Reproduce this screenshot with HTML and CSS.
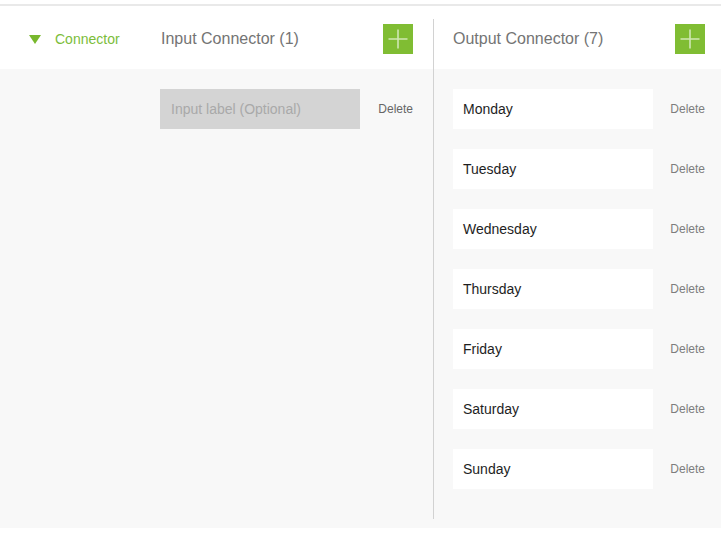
FILE: index.html
```html
<!DOCTYPE html>
<html>
<head>
<meta charset="utf-8">
<link rel="stylesheet" href="styles.css">
</head>
<body>
<div class="panel">
  <div class="side">
    <div class="side-head">
      <span class="tri"></span>
      <span class="side-title">Connector</span>
    </div>
  </div>
  <div class="col col-input">
    <div class="col-head">
      <span class="col-title">Input Connector (1)</span>
      <button class="add" type="button"><svg width="30" height="30" viewBox="0 0 30 30"><path d="M15 5.5V24.5M5.5 15H24.5" stroke="#cfe7b3" stroke-width="1.6" fill="none"/></svg></button>
    </div>
    <div class="rows">
      <div class="row"><div class="field field-empty">Input label (Optional)</div><span class="del del-dark">Delete</span></div>
    </div>
  </div>
  <div class="col col-output">
    <div class="col-head">
      <span class="col-title">Output Connector (7)</span>
      <button class="add" type="button"><svg width="30" height="30" viewBox="0 0 30 30"><path d="M15 5.5V24.5M5.5 15H24.5" stroke="#cfe7b3" stroke-width="1.6" fill="none"/></svg></button>
    </div>
    <div class="rows">
      <div class="row"><div class="field">Monday</div><span class="del">Delete</span></div>
      <div class="row"><div class="field">Tuesday</div><span class="del">Delete</span></div>
      <div class="row"><div class="field">Wednesday</div><span class="del">Delete</span></div>
      <div class="row"><div class="field">Thursday</div><span class="del">Delete</span></div>
      <div class="row"><div class="field">Friday</div><span class="del">Delete</span></div>
      <div class="row"><div class="field">Saturday</div><span class="del">Delete</span></div>
      <div class="row"><div class="field">Sunday</div><span class="del">Delete</span></div>
    </div>
  </div>
</div>
</body>
</html>
```
FILE: styles.css
```css
* { box-sizing: border-box; }
html, body { margin: 0; padding: 0; background: #fff; }
body {
  padding-top: 4px;
  font-family: "Liberation Sans", Arial, Helvetica, sans-serif;
  width: 721px;
  height: 535px;
  overflow: hidden;
}
.panel {
  border-top: 2px solid #e9e9e9;
  height: 524px;
  background: linear-gradient(#ffffff 0, #ffffff 63px, #f8f8f8 63px);
  display: grid;
  grid-template-columns: 160px 253px 292px;
  column-gap: 0;
  padding: 13px 16px 9px 0;
}
.side-head {
  height: 40px;
  display: flex;
  align-items: center;
  padding-left: 29px;
  gap: 14px;
}
.tri {
  width: 0;
  height: 0;
  border-left: 6px solid transparent;
  border-right: 6px solid transparent;
  border-top: 9px solid #78b82d;
  margin-top: 1px;
}
.side-title {
  color: #7cbd3a;
  font-size: 14px;
}
.col-output {
  margin-left: 20px;
  border-left: 1px solid #d2d2d2;
  padding-left: 19px;
}
.col-head {
  height: 40px;
  display: flex;
  align-items: center;
  justify-content: space-between;
}
.col-title {
  font-size: 16px;
  color: #747474;
  padding-left: 1px;
}
.col-output .col-title { padding-left: 0; }
.add {
  width: 30px;
  height: 30px;
  padding: 0;
  border: 0;
  background: #80bd33;
  display: block;
  flex-shrink: 0;
}
.add svg { display: block; }
.rows {
  margin-top: 30px;
  display: flex;
  flex-direction: column;
  gap: 20px;
}
.row {
  display: flex;
  align-items: center;
  justify-content: space-between;
  height: 40px;
}
.field {
  flex: 0 0 200px;
  width: 200px;
  height: 40px;
  background: #fff;
  color: #1e1e1e;
  font-size: 14px;
  line-height: 40px;
  padding-left: 10px;
}
.field-empty {
  background: #d4d4d4;
  color: #a9a9a9;
  padding-left: 11px;
}
.del {
  font-size: 12px;
  color: #7d7d7d;
}
.del-dark { color: #666; }
```
